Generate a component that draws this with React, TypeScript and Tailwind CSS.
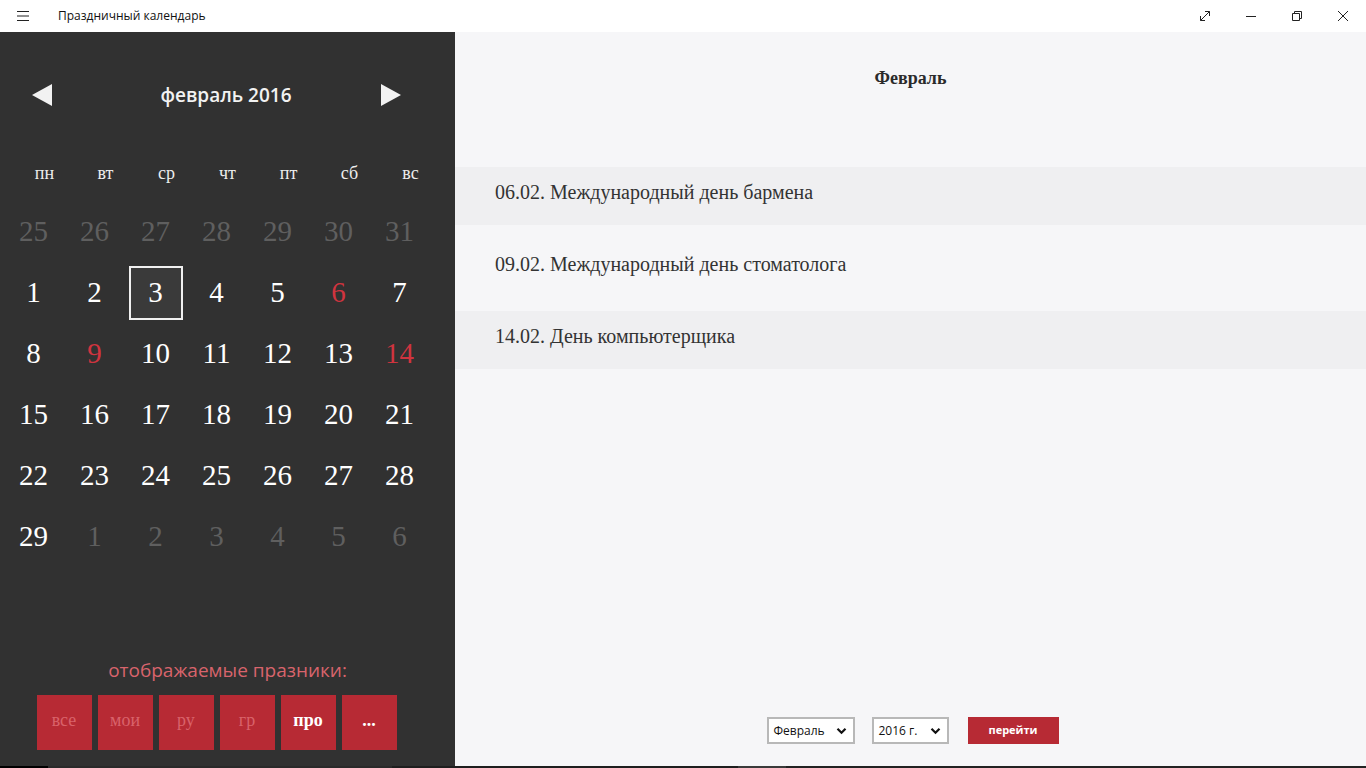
import React from "react";

const serif = { fontFamily: '"Liberation Serif", "DejaVu Serif", serif' };
const sans = { fontFamily: '"Open Sans", "Noto Sans", sans-serif' };

const weekDays = ["пн", "вт", "ср", "чт", "пт", "сб", "вс"];

type Day = { n: number; muted?: boolean; red?: boolean; selected?: boolean };

const days: Day[] = [
  ...[25, 26, 27, 28, 29, 30, 31].map((n) => ({ n, muted: true })),
  ...Array.from({ length: 29 }, (_, i) => ({
    n: i + 1,
    red: [6, 9, 14].includes(i + 1),
    selected: i + 1 === 3,
  })),
  ...[1, 2, 3, 4, 5, 6].map((n) => ({ n, muted: true })),
];

const holidays = [
  { text: "06.02. Международный день бармена", shaded: true },
  { text: "09.02. Международный день стоматолога", shaded: false },
  { text: "14.02. День компьютерщика", shaded: true },
];

const filters = [
  { label: "все", on: false },
  { label: "мои", on: false },
  { label: "ру", on: false },
  { label: "гр", on: false },
  { label: "про", on: true },
  { label: "...", on: true },
];

function Chevron() {
  return (
    <svg width="11" height="8" viewBox="0 0 11 8" fill="none">
      <path d="M1.5 1.8 L5.5 5.8 L9.5 1.8" stroke="#111" strokeWidth="2.2" />
    </svg>
  );
}

function TitleBar() {
  return (
    <div className="flex h-[32px] items-center bg-white text-[#111]">
      <div className="flex w-[46px] items-center justify-center">
        <svg width="14" height="12" viewBox="0 0 14 12">
          <path d="M1 1.5h12M1 6h12M1 10.5h12" stroke="#222" strokeWidth="1" />
        </svg>
      </div>
      <span className="ml-[12px] text-[12px]" style={sans}>
        Праздничный календарь
      </span>
      <div className="ml-auto flex h-full">
        <div className="flex w-[46px] items-center justify-center">
          <svg width="12" height="12" viewBox="0 0 12 12" fill="none" stroke="#222" strokeWidth="1">
            <path d="M1.5 10.5 L10.5 1.5 M6 1.5 H10.5 V6 M1.5 6 V10.5 H6" />
          </svg>
        </div>
        <div className="flex w-[46px] items-center justify-center">
          <svg width="12" height="12" viewBox="0 0 12 12">
            <path d="M1 6.5h10" stroke="#222" strokeWidth="1" />
          </svg>
        </div>
        <div className="flex w-[46px] items-center justify-center">
          <svg width="12" height="12" viewBox="0 0 12 12" fill="none" stroke="#222" strokeWidth="1">
            <path d="M1.5 3.5h7v7h-7z M3.5 3.5V1.5h7v7h-2" />
          </svg>
        </div>
        <div className="flex w-[46px] items-center justify-center">
          <svg width="12" height="12" viewBox="0 0 12 12" fill="none" stroke="#222" strokeWidth="1">
            <path d="M1 1 L11 11 M11 1 L1 11" />
          </svg>
        </div>
      </div>
    </div>
  );
}

function CalendarPanel() {
  return (
    <div className="flex w-[455px] flex-col bg-[#313131]">
      {/* month header */}
      <div className="mt-[48px] flex h-[30px] items-center px-[32px]">
        <svg width="20" height="22" viewBox="0 0 20 22">
          <path d="M20 0 V22 L0 11 Z" fill="#f2f2f2" />
        </svg>
        <span className="flex-1 pl-[19px] text-center text-[19px] font-semibold text-[#f2f2f2]" style={sans}>
          февраль 2016
        </span>
        <svg width="20" height="22" viewBox="0 0 20 22" className="mr-[22px]">
          <path d="M0 0 V22 L20 11 Z" fill="#f2f2f2" />
        </svg>
      </div>

      {/* weekdays */}
      <div className="mt-[38px] grid h-[50px] grid-cols-[repeat(7,61px)] items-center pl-[14px]">
        {weekDays.map((d) => (
          <span key={d} className="text-center text-[18px] text-[#ededed]" style={serif}>
            {d}
          </span>
        ))}
      </div>

      {/* days */}
      <div className="mt-[3px] grid grid-cols-[repeat(7,61px)] grid-rows-[repeat(6,61px)] pl-[3px]">
        {days.map((d, i) => (
          <div key={i} className="flex items-center justify-center">
            <div
              className={
                "flex h-[54px] w-[54px] items-center justify-center text-[29px] " +
                (d.selected ? "border-2 border-[#f0f0f0] bg-[#3a3a3a] " : "") +
                (d.muted ? "text-[#5f5f5f]" : d.red ? "text-[#d0343f]" : "text-white")
              }
              style={serif}
            >
              {d.n}
            </div>
          </div>
        ))}
      </div>

      {/* filters */}
      <div className="mt-auto flex flex-col items-center pb-[16px]">
        <span className="mb-[2px] text-[19px] text-[#d8646c]" style={sans}>
          отображаемые празники:
        </span>
        <div className="mt-[9px] flex gap-[6px] pr-[22px]">
          {filters.map((f) => (
            <div
              key={f.label}
              className={
                "flex h-[55px] w-[55px] items-center justify-center pb-[4px] text-[18px] bg-[#b72a34] " +
                (f.on ? "font-bold text-white" : "text-[#d9626a]")
              }
              style={serif}
            >
              {f.label}
            </div>
          ))}
        </div>
      </div>
    </div>
  );
}

function HolidayPanel() {
  return (
    <div className="flex flex-1 flex-col bg-[#f6f6f8] text-[#333]">
      <div className="mt-[33px] text-center text-[18px] font-bold text-[#2b2b2b]" style={serif}>
        Февраль
      </div>
      <div className="mt-[75px] flex flex-col gap-[14px]">
        {holidays.map((h) => (
          <div
            key={h.text}
            className={
              "flex h-[58px] items-center pb-[8px] pl-[40px] text-[20px] " +
              (h.shaded ? "bg-[#efeff1]" : "")
            }
            style={serif}
          >
            {h.text}
          </div>
        ))}
      </div>
      <div className="mt-auto mb-[22px] flex items-center justify-center gap-[17px] pl-[4px]">
        <div className="flex h-[27px] w-[88px] items-center justify-between border-2 border-[#b8b8b8] bg-white pl-[5px] pr-[6px] text-[12px] text-[#111]" style={sans}>
          <span>Февраль</span>
          <Chevron />
        </div>
        <div className="flex h-[27px] w-[77px] items-center justify-between border-2 border-[#b8b8b8] bg-white pl-[5px] pr-[6px] text-[12px] text-[#111]" style={sans}>
          <span>2016 г.</span>
          <Chevron />
        </div>
        <div className="ml-[2px] flex h-[27px] w-[91px] items-center justify-center bg-[#b72a34] text-[11px] font-bold text-white" style={sans}>
          перейти
        </div>
      </div>
    </div>
  );
}

export default function App() {
  return (
    <div className="flex h-[768px] w-[1366px] flex-col overflow-hidden">
      <TitleBar />
      <div className="flex flex-1">
        <CalendarPanel />
        <HolidayPanel />
      </div>
      <div className="flex h-[2px]">
        <div className="w-[48px] bg-black" />
        <div className="w-[344px] bg-[#2a2a2a]" />
        <div className="w-[346px] bg-[#1e1e1e]" />
        <div className="w-[48px] bg-[#3a3a3a]" />
        <div className="flex-1 bg-[#222]" />
      </div>
    </div>
  );
}
